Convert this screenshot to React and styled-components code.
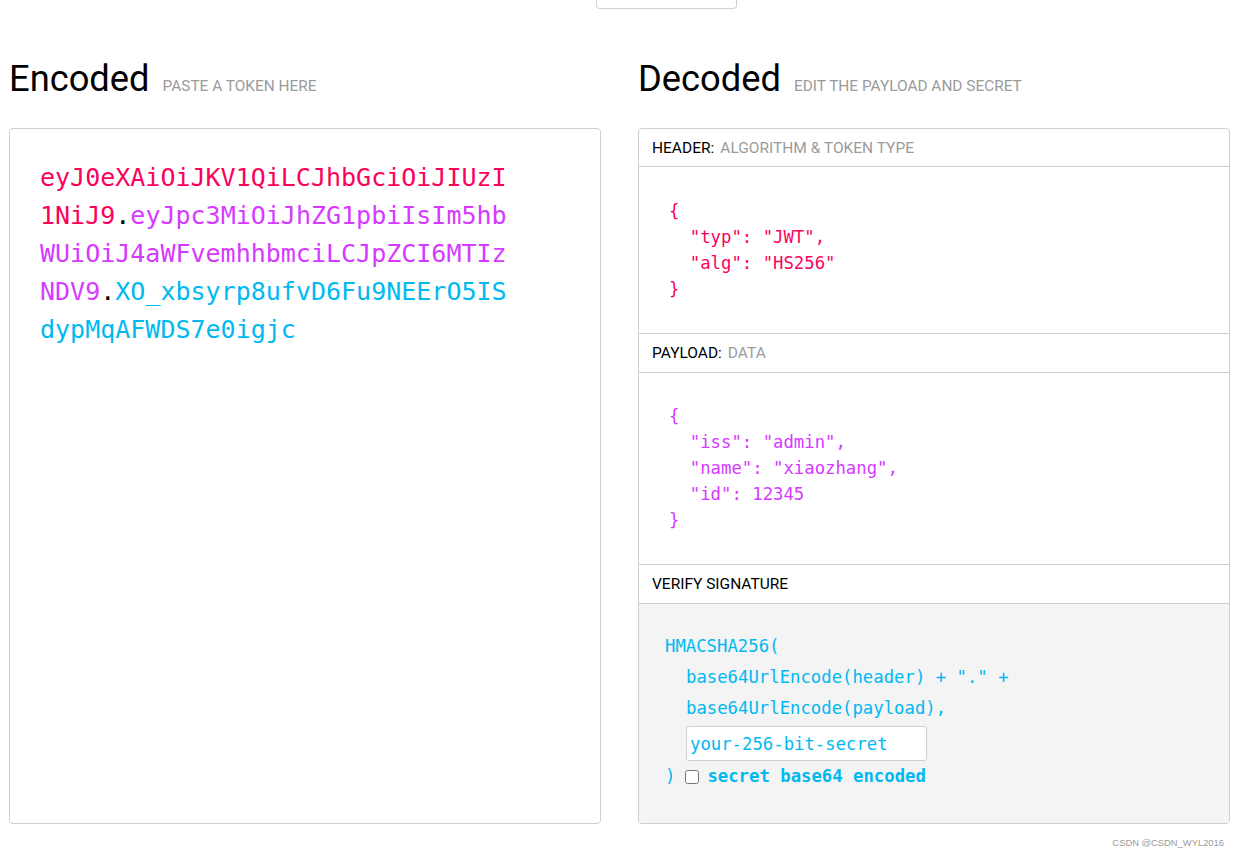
import React from 'react';
import styled, { createGlobalStyle } from 'styled-components';

const GlobalStyle = createGlobalStyle`
  html, body { margin: 0; padding: 0; background: #fff; }
  body {
    font-family: Roboto, "Liberation Sans", sans-serif;
    width: 1239px;
    height: 858px;
    overflow: hidden;
    color: #000;
  }
`;

const MONO = `"DejaVu Sans Mono", "Liberation Mono", monospace`;

const COLORS = {
  red: '#fb015b',
  purple: '#d63aff',
  blue: '#00b9f1',
};

const Page = styled.div`
  padding: 0 9px;
`;

const TopTab = styled.div`
  width: 139px;
  height: 8px;
  margin-left: 587px;
  border: 1px solid #d2d2d2;
  border-top: none;
  border-radius: 0 0 4px 4px;
`;

const Columns = styled.div`
  display: grid;
  grid-template-columns: 592px 592px;
  column-gap: 37px;
`;

const Column = styled.section`
  display: flex;
  flex-direction: column;
`;

const TitleRow = styled.div`
  box-sizing: border-box;
  height: 119px;
  padding-top: 52px;
  display: flex;
  align-items: baseline;
`;

const Title = styled.h2`
  margin: 0;
  font-family: Roboto, "Liberation Sans", sans-serif;
  font-weight: 400;
  font-size: 36.3px;
  line-height: 1;
`;

const Subtitle = styled.span`
  margin-left: 13px;
  font-size: 15.4px;
  color: #9b9b9b;
  text-transform: uppercase;
`;

const Panel = styled.div`
  box-sizing: border-box;
  height: 696px;
  border: 1px solid #cfcfcf;
  border-radius: 4px;
  overflow: hidden;
`;

const EncodedPanel = styled(Panel)`
  padding: 30px 30px;
`;

const TokenText = styled.div`
  width: 472px;
  font-family: ${MONO};
  font-size: 25px;
  line-height: 38px;
  word-break: break-all;
  color: #000;
`;

const TokenPart = styled.span`
  color: ${(p) => COLORS[p.$tone] || '#000'};
`;

const DecodedPanel = styled(Panel)`
  display: flex;
  flex-direction: column;
`;

const SectionLabel = styled.div`
  height: ${(p) => (p.$first ? '37px' : '38px')};
  flex: none;
  padding: 0 13px;
  display: flex;
  align-items: center;
  gap: 6px;
  font-size: 15.5px;
  border-bottom: 1px solid #cfcfcf;
  color: #000;
  text-transform: uppercase;
`;

const LabelHint = styled.span`
  color: #9b9b9b;
`;

const JsonBody = styled.pre`
  margin: 0;
  flex: none;
  padding: ${(p) => p.$pad};
  font-family: ${MONO};
  font-size: 17.3px;
  line-height: 26px;
  color: ${(p) => COLORS[p.$tone]};
  border-bottom: 1px solid #cfcfcf;
  white-space: pre;
`;

const SignatureBody = styled.div`
  flex: 1;
  background: #f4f4f4;
  padding: 27px 26px;
  font-family: ${MONO};
  font-size: 17.3px;
  line-height: 31px;
  color: ${COLORS.blue};
`;

const CodeLine = styled.div`
  padding-left: ${(p) => (p.$indent ? '21px' : '0')};
  white-space: pre;
  display: flex;
  align-items: center;
`;

const SecretInput = styled.input`
  display: block;
  box-sizing: border-box;
  width: 241px;
  height: 35px;
  margin: 2px 0 0 21px;
  padding: 0 3px;
  border: 1px solid #cfcfcf;
  border-radius: 3px;
  background: #fff;
  font-family: ${MONO};
  font-size: 17.3px;
  color: ${COLORS.blue};
  outline: none;
`;

const Check = styled.input`
  width: 14px;
  height: 14px;
  margin: 0 8px 0 10px;
`;

const Bold = styled.span`
  font-weight: 700;
`;

const Footer = styled.div`
  margin-top: 13px;
  padding-right: 6px;
  text-align: right;
  font-family: "Liberation Sans", Arial, sans-serif;
  font-size: 9.4px;
  line-height: 12px;
  color: #9a9a9a;
`;

const headerJson = `{
  "typ": "JWT",
  "alg": "HS256"
}`;

const payloadJson = `{
  "iss": "admin",
  "name": "xiaozhang",
  "id": 12345
}`;

export default function App() {
  return (
    <>
      <GlobalStyle />
      <Page>
        <TopTab />
        <Columns>
          <Column>
            <TitleRow>
              <Title>Encoded</Title>
              <Subtitle>Paste a token here</Subtitle>
            </TitleRow>
            <EncodedPanel>
              <TokenText>
                <TokenPart $tone="red">eyJ0eXAiOiJKV1QiLCJhbGciOiJIUzI1NiJ9</TokenPart>
                <TokenPart>.</TokenPart>
                <TokenPart $tone="purple">eyJpc3MiOiJhZG1pbiIsIm5hbWUiOiJ4aWFvemhhbmciLCJpZCI6MTIzNDV9</TokenPart>
                <TokenPart>.</TokenPart>
                <TokenPart $tone="blue">XO_xbsyrp8ufvD6Fu9NEErO5ISdypMqAFWDS7e0igjc</TokenPart>
              </TokenText>
            </EncodedPanel>
          </Column>
          <Column>
            <TitleRow>
              <Title>Decoded</Title>
              <Subtitle>Edit the payload and secret</Subtitle>
            </TitleRow>
            <DecodedPanel>
              <SectionLabel $first>
                Header: <LabelHint>Algorithm &amp; Token Type</LabelHint>
              </SectionLabel>
              <JsonBody $tone="red" $pad="31px 30px 31px 30px">{headerJson}</JsonBody>
              <SectionLabel>
                Payload: <LabelHint>Data</LabelHint>
              </SectionLabel>
              <JsonBody $tone="purple" $pad="30px 30px 31px 30px">{payloadJson}</JsonBody>
              <SectionLabel>Verify Signature</SectionLabel>
              <SignatureBody>
                <CodeLine>HMACSHA256(</CodeLine>
                <CodeLine $indent>base64UrlEncode(header) + "." +</CodeLine>
                <CodeLine $indent>base64UrlEncode(payload),</CodeLine>
                <SecretInput defaultValue="your-256-bit-secret" />
                <CodeLine>
                  )<Check type="checkbox" />
                  <Bold>secret base64 encoded</Bold>
                </CodeLine>
              </SignatureBody>
            </DecodedPanel>
          </Column>
        </Columns>
        <Footer>CSDN @CSDN_WYL2016</Footer>
      </Page>
    </>
  );
}
